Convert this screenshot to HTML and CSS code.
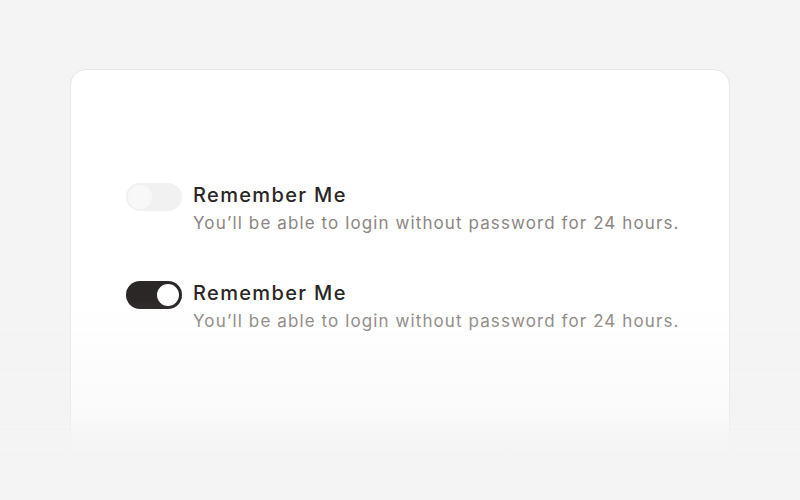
FILE: index.html
```html
<!DOCTYPE html>
<html>
<head>
<meta charset="utf-8">
<link rel="stylesheet" href="styles.css">
</head>
<body>
<div class="stage">
  <div class="card">
    <div class="option">
      <span class="toggle"><span class="knob"></span></span>
      <div class="text">
        <div class="title">Remember Me</div>
        <div class="desc">You’ll be able to login without password for 24 hours.</div>
      </div>
    </div>
    <div class="option">
      <span class="toggle on"><span class="knob"></span></span>
      <div class="text">
        <div class="title">Remember Me</div>
        <div class="desc">You’ll be able to login without password for 24 hours.</div>
      </div>
    </div>
  </div>
</div>
<div class="fade"></div>
</body>
</html>
```
FILE: styles.css
```css
html, body { margin: 0; padding: 0; }
body {
  background: #f4f4f4;
  font-family: Inter, "Noto Sans", sans-serif;
  width: 800px;
  height: 500px;
  overflow: hidden;
}
.stage {
  padding: 69px 70px 0 70px;
}
.card {
  box-sizing: border-box;
  width: 660px;
  height: 440px;
  background: #fff;
  border: 1px solid #e7e7e7;
  border-radius: 16px;
  padding: 112px 40px 0 55px;
  display: flex;
  flex-direction: column;
  gap: 44px;
}
.option {
  display: flex;
  align-items: flex-start;
  gap: 11px;
}
.toggle {
  flex: none;
  box-sizing: border-box;
  width: 56px;
  height: 28px;
  margin-top: 1px;
  border-radius: 14px;
  background: #f1f1f1;
  display: flex;
  align-items: center;
  padding: 2px;
}
.knob {
  width: 24px;
  height: 24px;
  border-radius: 50%;
  background: #f8f8f8;
  box-sizing: border-box;
}
.toggle.on {
  background: #2b2726;
  justify-content: flex-end;
}
.toggle.on .knob {
  background: #fff;
  border: 2px solid #2b2726;
  width: 26px;
  height: 26px;
  margin-right: -1px;
}
.title {
  font-size: 20px;
  line-height: 26px;
  color: #2a2626;
  font-weight: 500;
  letter-spacing: 1.35px;
}
.desc {
  font-size: 17px;
  line-height: 26px;
  margin-top: 2px;
  color: #8b8682;
  letter-spacing: 1.1px;
}
.fade {
  position: fixed;
  left: 0;
  right: 0;
  top: 300px;
  height: 200px;
  background: linear-gradient(to bottom, rgba(244,244,244,0) 0px, rgba(244,244,244,0.35) 100px, rgba(244,244,244,0.8) 135px, #f4f4f4 155px, #f4f4f4 200px);
  pointer-events: none;
}
```
